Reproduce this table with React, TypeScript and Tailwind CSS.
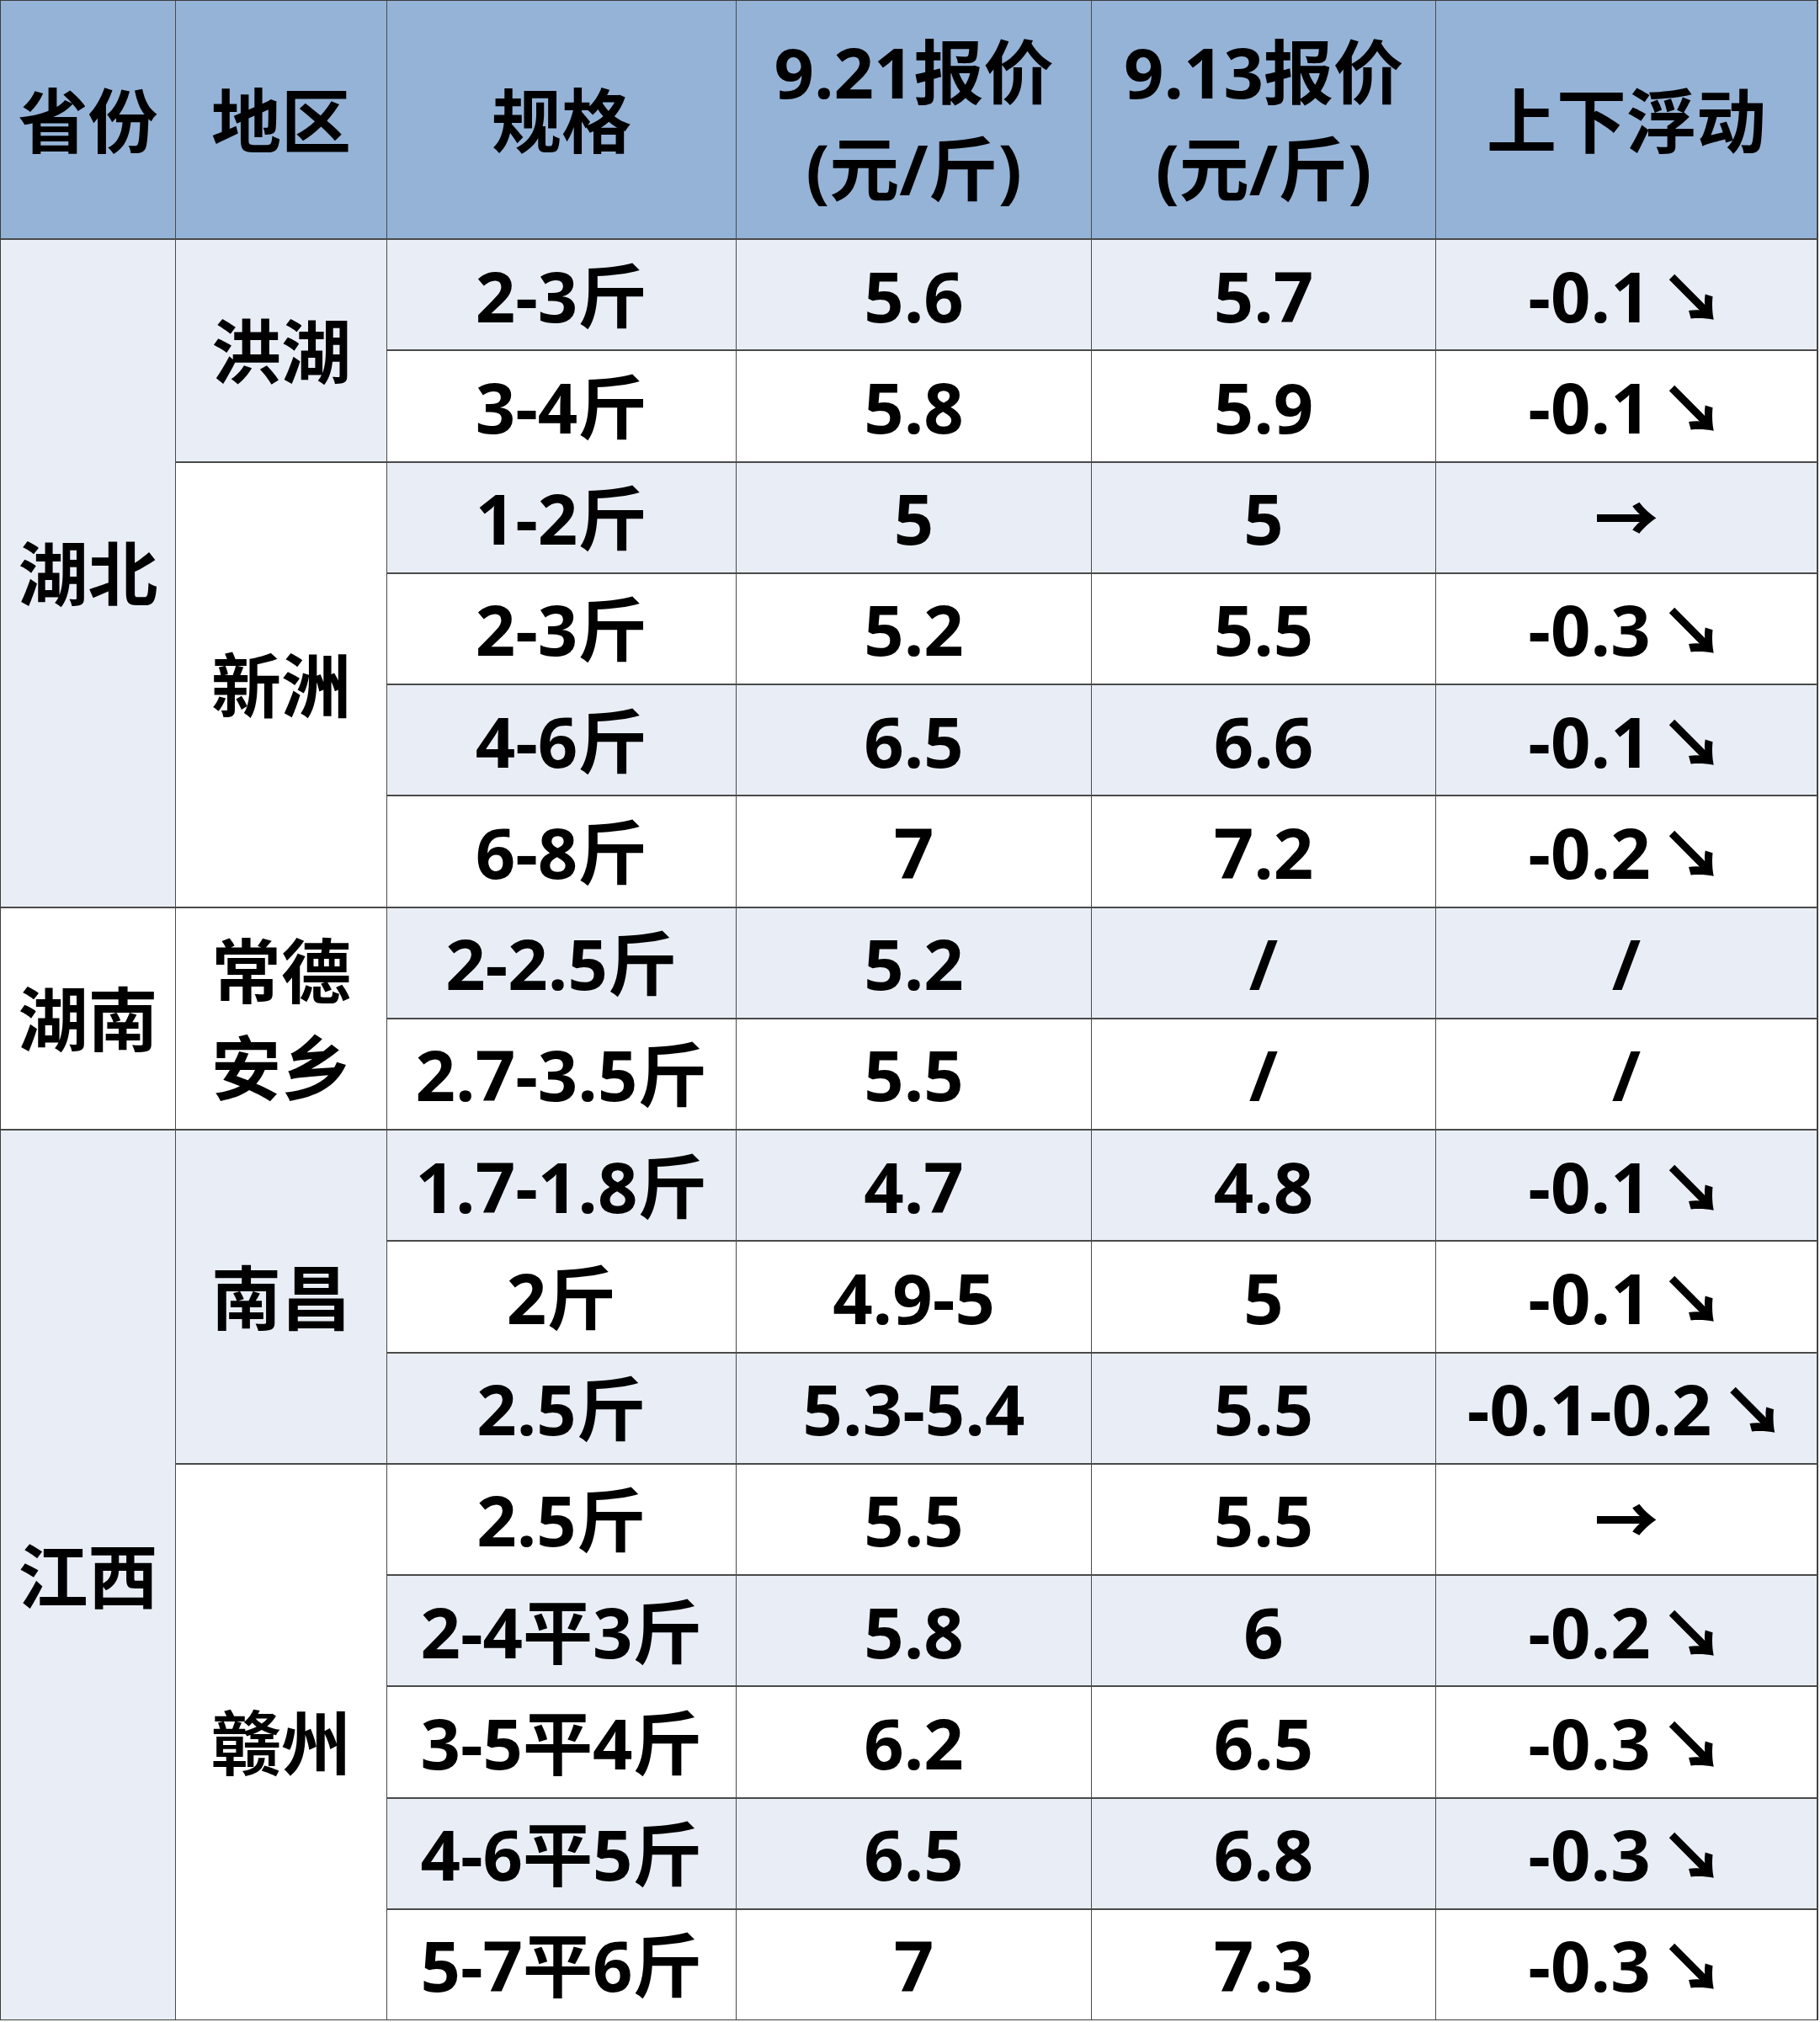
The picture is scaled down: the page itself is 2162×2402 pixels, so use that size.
const FONT = '"Open Sans", "Noto Sans CJK SC", sans-serif';

type Row = { spec: string; now: string; prev: string; diff: string };

const rows: Row[] = [
  { spec: '2-3斤', now: '5.6', prev: '5.7', diff: '-0.1↘' },
  { spec: '3-4斤', now: '5.8', prev: '5.9', diff: '-0.1↘' },
  { spec: '1-2斤', now: '5', prev: '5', diff: '→' },
  { spec: '2-3斤', now: '5.2', prev: '5.5', diff: '-0.3↘' },
  { spec: '4-6斤', now: '6.5', prev: '6.6', diff: '-0.1↘' },
  { spec: '6-8斤', now: '7', prev: '7.2', diff: '-0.2↘' },
  { spec: '2-2.5斤', now: '5.2', prev: '/', diff: '/' },
  { spec: '2.7-3.5斤', now: '5.5', prev: '/', diff: '/' },
  { spec: '1.7-1.8斤', now: '4.7', prev: '4.8', diff: '-0.1↘' },
  { spec: '2斤', now: '4.9-5', prev: '5', diff: '-0.1↘' },
  { spec: '2.5斤', now: '5.3-5.4', prev: '5.5', diff: '-0.1-0.2↘' },
  { spec: '2.5斤', now: '5.5', prev: '5.5', diff: '→' },
  { spec: '2-4平3斤', now: '5.8', prev: '6', diff: '-0.2↘' },
  { spec: '3-5平4斤', now: '6.2', prev: '6.5', diff: '-0.3↘' },
  { spec: '4-6平5斤', now: '6.5', prev: '6.8', diff: '-0.3↘' },
  { spec: '5-7平6斤', now: '7', prev: '7.3', diff: '-0.3↘' },
];

// merged cells that start on a given row index
const provinces: Record<number, { name: string; span: string; light: boolean }> = {
  0: { name: '湖北', span: 'row-span-6', light: true },
  6: { name: '湖南', span: 'row-span-2', light: false },
  8: { name: '江西', span: 'row-span-8', light: true },
};

const regions: Record<number, { lines: string[]; span: string; light: boolean }> = {
  0: { lines: ['洪湖'], span: 'row-span-2', light: true },
  2: { lines: ['新洲'], span: 'row-span-4', light: false },
  6: { lines: ['常德', '安乡'], span: 'row-span-2', light: false },
  8: { lines: ['南昌'], span: 'row-span-3', light: true },
  11: { lines: ['赣州'], span: 'row-span-5', light: false },
};

const cell = 'flex flex-col items-center justify-center text-center leading-[115px]';

const Diff = ({ value }: { value: string }) => {
  if (value.endsWith('↘')) {
    return (
      <span className="flex items-baseline">
        {value.slice(0, -1)}
        <span className="ml-[12px] text-[76px] font-black leading-none">↘</span>
      </span>
    );
  }
  if (value === '→') return <span className="text-[76px] font-black leading-none">→</span>;
  return <span>{value}</span>;
};

export default function App() {
  return (
    <div className="min-h-screen bg-white">
      <div
        className="grid w-[2160px] grid-cols-[207px_250px_414px_421px_408px_452px] grid-rows-[282px_repeat(16,130.25px)] gap-x-px gap-y-[2px] border border-[#3d3d3d] bg-[#4a4a4a] text-[83px] font-bold text-black"
        style={{ fontFamily: FONT }}
      >
        <div className={`${cell} bg-[#95b3d7]`}>省份</div>
        <div className={`${cell} bg-[#95b3d7]`}>地区</div>
        <div className={`${cell} bg-[#95b3d7]`}>规格</div>
        <div className={`${cell} bg-[#95b3d7] leading-[110px]`}>
          <span>9.21报价</span>
          <span>(元/斤)</span>
        </div>
        <div className={`${cell} bg-[#95b3d7] leading-[110px]`}>
          <span>9.13报价</span>
          <span>(元/斤)</span>
        </div>
        <div className={`${cell} bg-[#95b3d7]`}>上下浮动</div>

        {rows.map((r, i) => {
          const bg = i % 2 === 0 ? 'bg-[#e9eef6]' : 'bg-white';
          const prov = provinces[i];
          const reg = regions[i];
          return [
            prov && (
              <div
                key={`p${i}`}
                className={`${cell} ${prov.span} ${prov.light ? 'bg-[#e9eef6]' : 'bg-white'}`}
              >
                {prov.name}
              </div>
            ),
            reg && (
              <div
                key={`r${i}`}
                className={`${cell} ${reg.span} ${reg.light ? 'bg-[#e9eef6]' : 'bg-white'}`}
              >
                {reg.lines.map((l) => (
                  <span key={l}>{l}</span>
                ))}
              </div>
            ),
            <div key={`s${i}`} className={`${cell} ${bg}`}>{r.spec}</div>,
            <div key={`n${i}`} className={`${cell} ${bg}`}>{r.now}</div>,
            <div key={`o${i}`} className={`${cell} ${bg}`}>{r.prev}</div>,
            <div key={`d${i}`} className={`${cell} ${bg}`}>
              <Diff value={r.diff} />
            </div>,
          ];
        })}
      </div>
    </div>
  );
}
